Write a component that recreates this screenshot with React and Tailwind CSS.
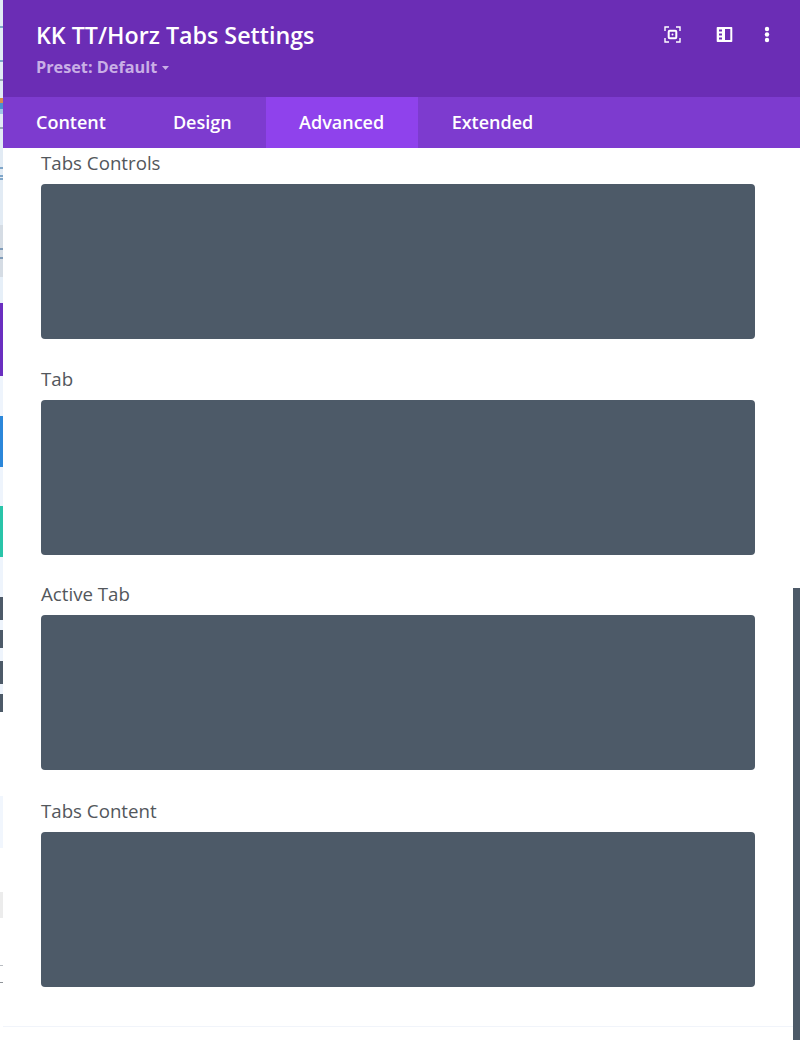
const font = { fontFamily: '"Open Sans", sans-serif' };

function Block({ label, labelClass }) {
  return (
    <div>
      <div className={"text-[18.7px] leading-[22px] text-[#53575c] " + labelClass}>{label}</div>
      <div className="h-[155px] rounded-[4px] bg-[#4d5a68]" />
    </div>
  );
}

const stripSegments = [
  [26, "#e2ebf4"], [2, "#7fa6c9"], [32, "#e2ebf4"], [2, "#7fa6c9"], [17, "#e2ebf4"], [2, "#9aa8b6"],
  [17, "#e2ebf4"], [5, "#d98a4a"], [6, "#4a90d0"], [5, "#9fc4e6"], [13, "#e2ebf4"], [2, "#9aa8b6"],
  [38, "#e2ebf4"], [2, "#7fa6c9"], [6, "#e2ebf4"], [2, "#7fa6c9"], [1, "#e2ebf4"], [2, "#7fa6c9"],
  [45, "#e2ebf4"], [23, "#d5dce4"], [2, "#7f9bb8"], [7, "#d5dce4"], [2, "#7f9bb8"], [18, "#d5dce4"],
  [26, "#e6eff8"],
  [73, "#6a2fc0"], [40, "#eef4fc"], [51, "#2b87da"], [39, "#eef4fc"], [51, "#29c4a9"], [40, "#eef4fc"],
  [23, "#4d5a68"], [10, "#eef4fc"], [18, "#4d5a68"], [13, "#eef4fc"], [23, "#4d5a68"], [10, "#eef4fc"], [18, "#4d5a68"],
  [84, "#ffffff"], [52, "#f1f6fd"], [44, "#ffffff"], [26, "#ececec"], [47, "#ffffff"], [1, "#b9bdc2"],
  [16, "#ffffff"], [1, "#8f9499"], [57, "#ffffff"],
];

function Strip() {
  return (
    <div className="w-[3px] h-[1040px] flex flex-col shrink-0">
      {stripSegments.map(([h, c], i) => (
        <div key={i} className="shrink-0" style={{ height: h, backgroundColor: c }} />
      ))}
    </div>
  );
}

export default function App() {
  return (
    <div className="w-[800px] h-[1040px] flex overflow-hidden bg-white" style={font}>
      <Strip />
      <div className="flex-1 flex flex-col min-w-0">
        <div className="h-[97px] bg-[#6b2db5] flex justify-between pl-[33px] pr-[30px] shrink-0">
          <div className="pt-[19px]">
            <div className="text-[23.25px] leading-[32px] font-semibold text-white">KK TT/Horz Tabs Settings</div>
            <div className="mt-[4px] flex items-center gap-[5px] text-[16.25px] leading-[24px] font-bold text-[#c9afe6]">
              Preset: Default
              <svg width="7" height="4" viewBox="0 0 7 4" className="mt-[1px]"><path d="M0 0h7L3.5 4z" fill="#c9afe6" /></svg>
            </div>
          </div>
          <div className="flex items-start gap-[35px] pt-[26px]">
            <svg width="17" height="17" viewBox="0 0 17 17" fill="none" stroke="white" strokeWidth="1.4">
              <path d="M1 5V1h4M12 1h4v4M16 12v4h-4M5 16H1v-4" />
              <rect x="4.7" y="4.7" width="7.6" height="7.6" rx="1" strokeWidth="2" />
              <circle cx="8.5" cy="8.5" r="1" fill="white" stroke="none" />
            </svg>
            <svg width="17" height="17" viewBox="0 0 17 17" fill="white">
              <path fillRule="evenodd" d="M1.5 1h14a.8.8 0 0 1 .8.8v13.4a.8.8 0 0 1-.8.8h-14a.8.8 0 0 1-.8-.8V1.800a.8.8 0 0 1 .8-.8zM9 3v11h5.300V3zM3 3.500v2h3v-2zM3 7.500v2h3v-2zM3 11.500v2h3v-2z" />
            </svg>
            <svg width="6" height="17" viewBox="0 0 6 17" fill="white" className="-ml-[4px]">
              <circle cx="3" cy="3" r="2.200" /><circle cx="3" cy="8.500" r="2.200" /><circle cx="3" cy="14" r="2.200" />
            </svg>
          </div>
        </div>
        <div className="h-[51px] bg-[#7d3bcf] flex shrink-0 text-[18px] leading-[51px] font-semibold text-white">
          <div className="pl-[33px] pr-[33px]">Content</div>
          <div className="pl-[34px] pr-[34px]">Design</div>
          <div className="w-[152px] bg-[#8f42ec] text-center">Advanced</div>
          <div className="pl-[34px]">Extended</div>
        </div>
        <div className="flex-1 flex min-h-0">
          <div className="flex-1 flex flex-col min-w-0">
            <div className="pl-[38px] pr-[38px] flex-1">
              <Block label="Tabs Controls" labelClass="mt-[4px] mb-[10px]" />
              <Block label="Tab" labelClass="mt-[29px] mb-[10px]" />
              <Block label="Active Tab" labelClass="mt-[28px] mb-[10px]" />
              <Block label="Tabs Content" labelClass="mt-[30px] mb-[10px]" />
            </div>
            <div className="h-[14px] border-t border-[#f1f4fa] shrink-0" />
          </div>
          <div className="w-[7px] pt-[440px] shrink-0">
            <div className="h-full bg-[#4d5a68]" />
          </div>
        </div>
      </div>
    </div>
  );
}
